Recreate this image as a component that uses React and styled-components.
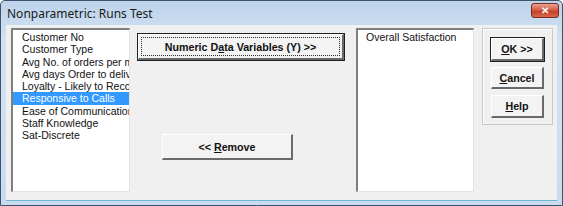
import React from "react";
import styled, { createGlobalStyle } from "styled-components";

const GlobalStyle = createGlobalStyle`
  html, body {
    margin: 0;
    padding: 0;
    background: #ffffff;
  }
`;

const Window = styled.div`
  width: 563px;
  height: 206px;
  box-sizing: border-box;
  border: 1px solid #3f5368;
  border-radius: 5px 5px 0 0;
  background: linear-gradient(#bcd3eb, #d3e2f3 40px, #c9dcef);
  display: flex;
  flex-direction: column;
  font-family: "Liberation Sans", Arial, sans-serif;
  overflow: hidden;
`;

const TitleBar = styled.div`
  height: 24px;
  display: flex;
  align-items: center;
  justify-content: space-between;
  padding: 0 3px 0 6px;
  flex-shrink: 0;
`;

const Title = styled.span`
  font-family: "Noto Sans", "Liberation Sans", sans-serif;
  font-size: 12px;
  color: #1a1a1a;
`;

const CloseButton = styled.div`
  width: 26px;
  height: 13px;
  margin-top: -5px;
  border: 1px solid #7a2b22;
  border-radius: 3px;
  background: linear-gradient(#e8a493, #d2563d 50%, #c23a22 51%, #d86a4a);
  display: flex;
  align-items: center;
  justify-content: center;
  color: #ffffff;
  font-size: 10px;
  font-weight: bold;
  line-height: 1;
`;

const Client = styled.div`
  flex: 1;
  margin: 0 5px 4px 5px;
  background: #f0f0f0;
  border-bottom: 1px solid #6fb6d6;
  display: flex;
  align-items: flex-start;
  padding: 3px 0 0 5px;
`;

const ListBox = styled.div`
  width: ${(p) => p.$width}px;
  height: 164px;
  box-sizing: border-box;
  background: #ffffff;
  border-top: 2px solid #7f7f7f;
  border-left: 2px solid #7f7f7f;
  border-right: 1px solid #e3e3e3;
  border-bottom: 1px solid #e3e3e3;
  padding-top: 1px;
  overflow: hidden;
  flex-shrink: 0;
`;

const ListItem = styled.div`
  height: 12.3px;
  line-height: 12.3px;
  font-size: 10.5px;
  white-space: nowrap;
  padding-left: ${(p) => p.$indent}px;
  color: ${(p) => (p.$selected ? "#ffffff" : "#111111")};
  background: ${(p) => (p.$selected ? "#3399ff" : "transparent")};
`;

const Middle = styled.div`
  width: 226px;
  display: flex;
  flex-direction: column;
  flex-shrink: 0;
`;

const Button = styled.button`
  box-sizing: border-box;
  width: ${(p) => p.$width}px;
  height: ${(p) => p.$height}px;
  margin: ${(p) => p.$margin};
  padding: 0;
  background: #f3f3f3;
  font-family: "Liberation Sans", Arial, sans-serif;
  font-size: 10.7px;
  font-weight: bold;
  color: #111111;
  border-style: solid;
  border-width: 1px 2px 2px 1px;
  border-color: #ffffff #6a6a6a #6a6a6a #ffffff;
  box-shadow: ${(p) => (p.$default ? "0 0 0 1px #1f1f1f" : "none")};
  display: flex;
  align-items: center;
  justify-content: center;
  position: relative;
  cursor: default;
`;

const Label = styled.span`
  white-space: pre;
`;

const FocusRing = styled.span`
  position: absolute;
  inset: 2px;
  border: 1px dotted #303030;
  pointer-events: none;
`;

const U = styled.span`
  text-decoration: underline;
`;

const Frame = styled.div`
  width: 71px;
  height: 97px;
  box-sizing: border-box;
  margin-left: 8px;
  border: 1px solid #c9c9c9;
  box-shadow: inset 1px 1px 0 #ffffff;
  display: flex;
  flex-direction: column;
  align-items: center;
  gap: 6px;
  padding-top: 9px;
  flex-shrink: 0;
`;

const variables = [
  "Customer No",
  "Customer Type",
  "Avg No. of orders per month",
  "Avg days Order to delivery",
  "Loyalty - Likely to Recommend",
  "Responsive to Calls",
  "Ease of Communication",
  "Staff Knowledge",
  "Sat-Discrete",
];

export default function App() {
  return (
    <>
      <GlobalStyle />
      <Window>
        <TitleBar>
          <Title>Nonparametric: Runs Test</Title>
          <CloseButton>✕</CloseButton>
        </TitleBar>
        <Client>
          <ListBox $width={119}>
            {variables.map((v) => (
              <ListItem
                key={v}
                $indent={9}
                $selected={v === "Responsive to Calls"}
              >
                {v}
              </ListItem>
            ))}
          </ListBox>
          <Middle>
            <Button $width={206} $height={26} $margin="6px 0 0 8px" $default>
              <FocusRing />
              <Label>
                Numeric D<U>a</U>ta Variables (Y) &gt;&gt;
              </Label>
            </Button>
            <Button $width={131} $height={26} $margin="74px 0 0 32px">
              <Label>
                {"<< "}
                <U>R</U>emove
              </Label>
            </Button>
          </Middle>
          <ListBox $width={118}>
            <ListItem $indent={8}>Overall Satisfaction</ListItem>
          </ListBox>
          <Frame>
            <Button $width={53} $height={23} $margin="0" $default>
              <Label>
                <U>O</U>K &gt;&gt;
              </Label>
            </Button>
            <Button $width={53} $height={22} $margin="0">
              <Label>
                <U>C</U>ancel
              </Label>
            </Button>
            <Button $width={53} $height={23} $margin="0">
              <Label>
                <U>H</U>elp
              </Label>
            </Button>
          </Frame>
        </Client>
      </Window>
    </>
  );
}
